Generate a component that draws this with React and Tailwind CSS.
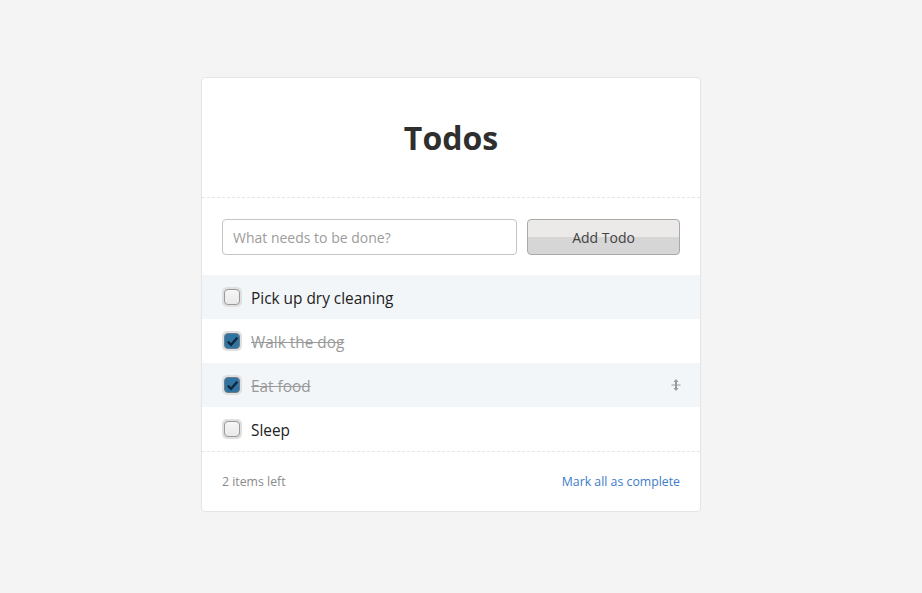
import React from 'react';

const todos = [
  { text: 'Pick up dry cleaning', done: false },
  { text: 'Walk the dog', done: true },
  { text: 'Eat food', done: true, handle: true },
  { text: 'Sleep', done: false },
];

function Checkbox({ checked }) {
  return (
    <span className="flex h-[20px] w-[20px] items-center justify-center rounded-[5px] bg-[#e0e0e0]">
      <span
        className={`flex h-[16px] w-[16px] items-center justify-center rounded-[4px] border ${
          checked
            ? 'border-[#6b7d8a] bg-[#2f74a3]'
            : 'border-[#9a9a9a] bg-gradient-to-b from-[#f6f6f6] to-[#e9e9e9]'
        }`}
      >
        {checked && (
          <svg viewBox="0 0 14 14" className="h-[13px] w-[13px]">
            <path d="M2 7.2 L5.4 10.6 L12.2 3" fill="none" stroke="#14263a" strokeWidth="2.6" />
          </svg>
        )}
      </span>
    </span>
  );
}

function DragHandle() {
  return (
    <svg viewBox="0 0 10 12" className="h-[12px] w-[10px]">
      <path d="M5 0 L7.5 3 L2.5 3 Z M5 12 L7.5 9 L2.5 9 Z" fill="#9a9a9a" />
      <rect x="4" y="2" width="2" height="8" fill="#9a9a9a" />
      <rect x="0.5" y="5.5" width="9" height="1" fill="#9a9a9a" />
    </svg>
  );
}

export default function App() {
  return (
    <div className="min-h-screen bg-[#f4f4f4] pt-[77px] font-['Open_Sans',sans-serif]">
      <div className="ml-[201px] w-[500px] rounded-[4px] border border-[#e4e4e4] bg-white">
        {/* Header */}
        <div className="flex h-[120px] items-center justify-center border-b border-dashed border-[#e6e6e6]">
          <h1 className="text-[32px] font-bold leading-none text-[#2f2f2f]">Todos</h1>
        </div>

        {/* New todo */}
        <div className="flex gap-[10px] px-[20px] pt-[21px] pb-[20px]">
          <input
            placeholder="What needs to be done?"
            className="h-[36px] w-[295px] rounded-[4px] border border-[#c4c4c4] px-[10px] text-[14px] text-[#333] outline-none placeholder:text-[#9c9c9c]"
          />
          <button className="h-[36px] flex-1 rounded-[4px] border border-[#a9a9a9] bg-[linear-gradient(#ebeae8_0%,#ebeae8_50%,#d6d6d6_50%,#d6d6d6_100%)] text-[14px] text-[#444]">
            Add Todo
          </button>
        </div>

        {/* List */}
        <ul className="border-b border-dashed border-[#e6e6e6]">
          {todos.map((t, i) => (
            <li
              key={i}
              className={`flex h-[44px] items-center pl-[20px] pr-[20px] ${
                i % 2 === 0 ? 'bg-[#f3f6f9]' : 'bg-white'
              }`}
            >
              <Checkbox checked={t.done} />
              <span
                className={`ml-[9px] pt-[4px] text-[15.4px] ${
                  t.done ? 'text-[#9a9a9a] line-through' : 'text-[#222]'
                }`}
              >
                {t.text}
              </span>
              {t.handle && (
                <span className="ml-auto mr-[-1px]">
                  <DragHandle />
                </span>
              )}
            </li>
          ))}
        </ul>

        {/* Footer */}
        <div className="flex h-[59px] items-center justify-between px-[20px] pt-[2px] text-[12.3px]">
          <span className="text-[#8a8a8a]">2 items left</span>
          <a href="#" className="text-[#3d7cc9]">
            Mark all as complete
          </a>
        </div>
      </div>
    </div>
  );
}
